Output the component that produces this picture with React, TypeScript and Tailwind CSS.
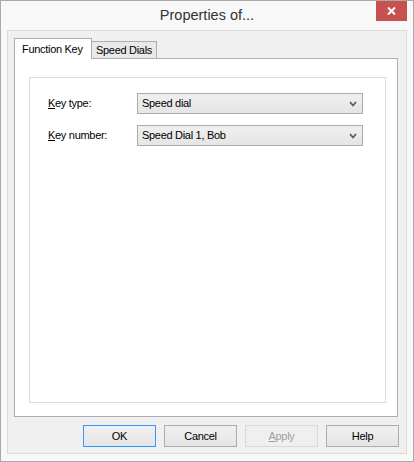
import React from 'react';

const font = { fontFamily: '"Liberation Sans", Arial, sans-serif' };

function Chevron() {
  return (
    <svg width="8" height="6" viewBox="0 0 8 6" className="shrink-0">
      <polyline points="1,1 4,4.5 7,1" fill="none" stroke="#5a5a5a" strokeWidth="1.7" />
    </svg>
  );
}

function Combo({ value }: { value: string }) {
  return (
    <div className="flex h-[21px] w-[226px] items-center justify-between border border-[#acacac] bg-gradient-to-b from-[#f0f0f0] to-[#e5e5e5] pl-[4px] pr-[5px] text-[11px] tracking-[-0.3px] text-black">
      <span>{value}</span>
      <Chevron />
    </div>
  );
}

function DlgButton({ label, kind }: { label: React.ReactNode; kind?: 'default' | 'disabled' }) {
  const cls =
    kind === 'default'
      ? 'border-[#3399ff] bg-gradient-to-b from-[#f0f0f0] to-[#e5e5e5] text-black'
      : kind === 'disabled'
      ? 'border-[#d9d9d9] bg-[#efefef] text-[#a0a0a0]'
      : 'border-[#acacac] bg-gradient-to-b from-[#f0f0f0] to-[#e5e5e5] text-black';
  return (
    <div className={`flex h-[22px] w-[73px] items-center justify-center border text-[11px] tracking-[-0.3px] ${cls}`}>
      {label}
    </div>
  );
}

export default function App() {
  return (
    <div
      className="flex h-[462px] w-[414px] flex-col border border-[#aaaaaa] bg-[#f8f8f8]"
      style={font}
    >
      {/* title bar */}
      <div className="relative flex h-[29px] shrink-0 items-center justify-center">
        <span className="text-[14.5px] text-[#333333]">Properties of...</span>
        <div className="absolute right-[6px] top-0 flex h-[20px] w-[31px] items-center justify-center bg-[#c75050]">
          <svg width="9" height="8" viewBox="0 0 9 8">
            <path d="M1 0.5 L8 7.5 M8 0.5 L1 7.5" stroke="#ffffff" strokeWidth="2" />
          </svg>
        </div>
      </div>

      {/* client area */}
      <div className="mx-[6px] flex h-[424px] flex-col border border-[#dadada] bg-[#f0f0f0] pl-[6px] pr-[7px] pt-[7px] pb-[6px]">
        {/* tabs */}
        <div className="flex h-[20px] items-end">
          <div className="relative z-10 -mb-px flex h-[21px] w-[78px] items-center border border-b-0 border-[#adadad] bg-white pl-[7px] text-[11px] tracking-[-0.3px] text-black">
            Function Key
          </div>
          <div className="-ml-px flex h-[17px] w-[66px] items-center border border-b-0 border-[#adadad] bg-[#e9e9e9] pl-[4px] text-[11px] tracking-[-0.3px] text-black">
            Speed Dials
          </div>
        </div>

        {/* tab panel */}
        <div className="flex h-[359px] w-[384px] flex-col border border-[#adadad] bg-white pl-[14px] pr-[11px] pt-[18px] pb-[13px]">
          <div className="flex flex-1 flex-col gap-[11px] border border-[#dcdcdc] pl-[18px] pt-[15px]">
            <div className="flex items-center">
              <span className="w-[89px] text-[11px] tracking-[-0.3px] text-black">
                <u>K</u>ey type:
              </span>
              <Combo value="Speed dial" />
            </div>
            <div className="flex items-center">
              <span className="w-[89px] text-[11px] tracking-[-0.3px] text-black">
                <u>K</u>ey number:
              </span>
              <Combo value="Speed Dial 1, Bob" />
            </div>
          </div>
        </div>

        {/* buttons */}
        <div className="mt-[8px] flex justify-end gap-[8px]">
          <DlgButton label="OK" kind="default" />
          <DlgButton label="Cancel" />
          <DlgButton
            label={
              <span>
                <u>A</u>pply
              </span>
            }
            kind="disabled"
          />
          <DlgButton label="Help" />
        </div>
      </div>
    </div>
  );
}
